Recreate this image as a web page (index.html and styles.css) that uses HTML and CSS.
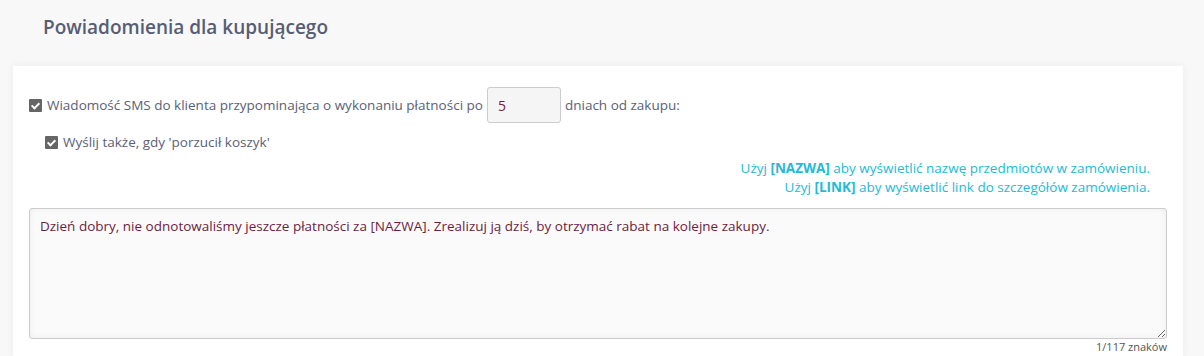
FILE: index.html
```html
<!DOCTYPE html>
<html lang="pl">
<head>
  <meta charset="UTF-8" />
  <title>Powiadomienia dla kupującego</title>
  <link rel="stylesheet" href="styles.css">
</head>
<body>

  <h2 class="tytul">Powiadomienia dla kupującego</h2>

  <div class="karta">
    <div class="wiersz">
      <label class="opcja">
        <span class="pole-check"></span>
        Wiadomość SMS do klienta przypominająca o wykonaniu płatności po
      </label>
      <input type="text" class="dni" value="5" />
      <span>dniach od zakupu:</span>
    </div>

    <div class="wiersz podrzedny">
      <label class="opcja">
        <span class="pole-check"></span>
        Wyślij także, gdy 'porzucił koszyk'
      </label>
    </div>

    <div class="pomoc">
      <p>Użyj <b>[NAZWA]</b> aby wyświetlić nazwę przedmiotów w zamówieniu.</p>
      <p>Użyj <b>[LINK]</b> aby wyświetlić link do szczegółów zamówienia.</p>
    </div>

    <textarea class="tresc">Dzień dobry, nie odnotowaliśmy jeszcze płatności za [NAZWA]. Zrealizuj ją dziś, by otrzymać rabat na kolejne zakupy.</textarea>
    <div class="licznik">1/117 znaków</div>
  </div>

</body>
</html>
```

FILE: styles.css
```css
body {
  margin: 0;
  background-color: #f8f8f9;
  font-family: "Open Sans", Arial, sans-serif;
  font-size: 13.5px;
  color: #555;
}

.tytul {
  margin: 0;
  padding: 14px 43px 0;
  height: 66px;
  box-sizing: border-box;
  font-size: 19px;
  font-weight: 600;
  color: #575d72;
}

.karta {
  margin: 0 21px 0 13px;
  padding: 21px 16px 0;
  background-color: #fff;
  box-shadow: 0 0 8px rgba(0, 0, 0, 0.06);
}

.wiersz {
  display: flex;
  align-items: center;
  gap: 4px;
  color: #5b6176;
}

.podrzedny {
  margin-top: 10px;
  padding-left: 16px;
}

.opcja {
  display: flex;
  align-items: center;
  gap: 5px;
}

.pole-check {
  width: 13px;
  height: 13px;
  border-radius: 1px;
  background-color: #666;
  position: relative;
}

.pole-check::after {
  content: "";
  position: absolute;
  left: 4px;
  top: 2px;
  width: 3px;
  height: 6px;
  border: solid #fff;
  border-width: 0 2px 2px 0;
  transform: rotate(45deg);
}

.dni {
  width: 74px;
  height: 36px;
  box-sizing: border-box;
  padding: 0 10px;
  border: 1px solid #ccc;
  border-radius: 3px;
  background-color: #f5f5f5;
  font-family: inherit;
  font-size: 14px;
  color: #7a1c3c;
}

.pomoc {
  margin-top: 8px;
  text-align: right;
  color: #25b9d7;
  padding-right: 17px;
}

.pomoc p {
  margin: 0;
  line-height: 19px;
}

.tresc {
  display: block;
  width: 100%;
  height: 131px;
  box-sizing: border-box;
  margin-top: 11px;
  padding: 8px 10px;
  border: 1px solid #ccc;
  border-radius: 3px;
  background-color: #fafafa;
  box-shadow: inset 0 0 6px rgba(0, 0, 0, 0.06);
  font-family: inherit;
  font-size: 13.5px;
  color: #6c1d3f;
  resize: vertical;
}

.licznik {
  text-align: right;
  font-size: 11px;
  color: #555;
  padding: 0 0 4px;
}
```
